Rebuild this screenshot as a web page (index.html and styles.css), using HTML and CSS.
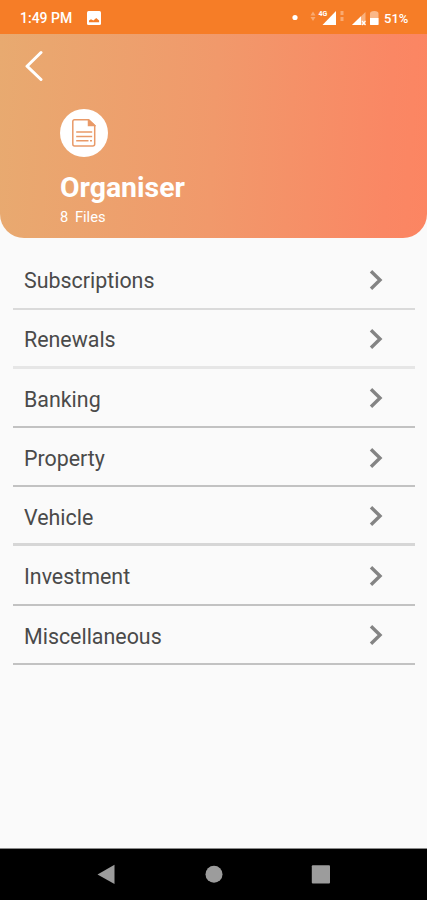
FILE: index.html
```
<!DOCTYPE html>
<html lang="en">
<head>
<meta charset="utf-8">
<title>Organiser</title>
<link rel="stylesheet" href="styles.css">
</head>
<body>
<div class="screen">
  <div class="status">
    <span class="clock">1:49 PM</span>
    <svg class="photo" width="14" height="14" viewBox="0 0 14 14"><rect width="14" height="14" rx="1.5" fill="#fff"/><path d="M2 11.200v-1.700l2-1.300 2.400 1.200L9.200 7l2.900 2.500v1.700z" fill="#f67d27"/></svg>
    <svg class="signals" width="90" height="20" viewBox="0 0 90 20">
      <circle cx="5" cy="9.500" r="2.600" fill="#fff"/>
      <g fill="#fff" opacity=".35"><path d="M20.500 7.500l2.500-4 2.500 4zM20.500 9l2.500 4 2.500-4zM50.500 3h3v4h-3zM50.500 9h3v4h-3z"/></g>
      <path d="M46 3v14H32.500z" fill="#fff"/>
      <path d="M75.500 4v13H62z" fill="#fff" opacity=".4"/>
      <path d="M71 8.200V17h-9z" fill="#fff"/>
      <path d="M72 13l3.500 4m0-4L72 17" stroke="#fff" stroke-width="1.200"/>
      <path d="M80 17V5.500q0-2.500 4.300-2.500t4.200 2.500V17z" fill="#fff" opacity=".45"/>
      <path d="M80 10h8.500v6.200q0 .8-.8.8h-6.900q-.8 0-.8-.8z" fill="#fff"/>
      <text class="net" x="28.500" y="7.600">4G</text>
    </svg>
    <span class="battery">51%</span>
  </div>
  <header class="hero">
    <svg class="back" width="20" height="32" viewBox="0 0 20 32"><path d="M18 2.500L4 16.200 18 29.500" fill="none" stroke="#fff" stroke-width="3" stroke-linecap="round" stroke-linejoin="round"/></svg>
    <div class="badge">
      <svg width="24" height="28" viewBox="0 0 24 28" fill="none" stroke="#e99a68" stroke-width="1.500"><path d="M2.500.800H16.500L22.700 6.500V25q0 2-2 2H2.500q-1.700 0-1.700-2V2.500Q.800.800 2.500.800z"/><path d="M16.500.800V6.500h6.200z" fill="#e99a68"/><path d="M4.200 13h16M4.200 17.500h16M4.200 21.700h12.300M18 21.700h2"/></svg>
    </div>
    <h1 class="title">Organiser</h1>
    <p class="count">8 Files</p>
  </header>
  <main class="list">
    <div class="row light"><span class="name">Subscriptions</span><svg class="chevron" viewBox="0 0 14 22"><path d="M2 2.200L11 11 2 19.800"/></svg></div>
    <div class="row soft"><span class="name">Renewals</span><svg class="chevron" viewBox="0 0 14 22"><path d="M2 2.200L11 11 2 19.800"/></svg></div>
    <div class="row"><span class="name">Banking</span><svg class="chevron" viewBox="0 0 14 22"><path d="M2 2.200L11 11 2 19.800"/></svg></div>
    <div class="row"><span class="name">Property</span><svg class="chevron" viewBox="0 0 14 22"><path d="M2 2.200L11 11 2 19.800"/></svg></div>
    <div class="row wide"><span class="name">Vehicle</span><svg class="chevron" viewBox="0 0 14 22"><path d="M2 2.200L11 11 2 19.800"/></svg></div>
    <div class="row"><span class="name">Investment</span><svg class="chevron" viewBox="0 0 14 22"><path d="M2 2.200L11 11 2 19.800"/></svg></div>
    <div class="row"><span class="name">Miscellaneous</span><svg class="chevron" viewBox="0 0 14 22"><path d="M2 2.200L11 11 2 19.800"/></svg></div>
  </main>
  <nav class="navbar">
    <svg width="427" height="51" viewBox="0 0 427 51" fill="#9c9c9c"><path d="M97.500 25.500L114.500 15.800V35z"/><circle cx="214" cy="25.300" r="8.500"/><rect x="311.800" y="16.300" width="18.200" height="18.200" rx="1"/></svg>
  </nav>
</div>
</body>
</html>
```
FILE: styles.css
```
body {
  margin: 0;
  font-family: Roboto, sans-serif;
}

.screen {
  display: flex;
  flex-direction: column;
  width: 427px;
  height: 900px;
  overflow: hidden;
  background: #fafafa;
}

.status {
  display: flex;
  align-items: center;
  box-sizing: border-box;
  height: 34px;
  padding: 2px 17px 0 20px;
  background: #f67d27;
  color: #fff;
  font-size: 14px;
  font-weight: 500;
}

.clock {
  width: 67px;
  white-space: nowrap;
}

.signals {
  margin-left: auto;
}

.net {
  fill: #fff;
  font-size: 7px;
  font-weight: 700;
}

.battery {
  width: 26px;
  margin-left: 4px;
  font-size: 13px;
}

.hero {
  box-sizing: border-box;
  height: 204px;
  padding: 16px 0 0 60px;
  border-radius: 0 0 24px 24px;
  background: linear-gradient(93deg, #e8aa70 0%, #f1996b 50%, #fa8764 90%, #fc8562 100%);
  color: #fff;
}

.back {
  display: block;
  margin-left: -37px;
}

.badge {
  display: flex;
  align-items: center;
  justify-content: center;
  width: 48px;
  height: 48px;
  margin-top: 27px;
  border-radius: 50%;
  background: #fff;
}

.title {
  margin: 15px 0 0;
  font-size: 28.4px;
  font-weight: 700;
  line-height: 32px;
}

.count {
  margin: 5px 0 0;
  font-size: 14.700px;
  line-height: 16px;
  word-spacing: 3px;
}

.list {
  flex: 1;
  padding: 12.400px 12px 0 13px;
}

.row {
  display: flex;
  align-items: center;
  justify-content: space-between;
  box-sizing: border-box;
  height: 59.2px;
  padding: 4px 32px 0 11px;
  border-bottom: 2px solid #c2c2c2;
}

.row.light {
  border-color: #dadada;
}

.row.soft {
  border-bottom: 3px solid #e6e6e6;
}

.row.wide {
  border-bottom: 3px solid #d6d6d6;
}

.name {
  color: #4a4a4a;
  font-size: 21.400px;
}

.chevron {
  width: 14px;
  height: 22px;
  margin-bottom: 2px;
  fill: none;
  stroke: #848484;
  stroke-width: 3.400;
}

.navbar {
  box-sizing: border-box;
  height: 52px;
  border-top: 1px solid #8a8a8a;
  background: #000;
}
```
